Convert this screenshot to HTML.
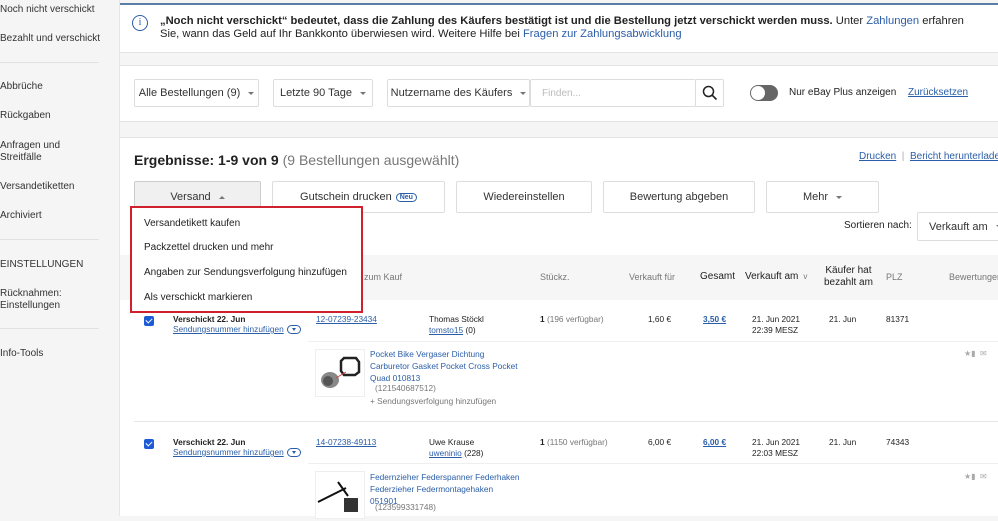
<!DOCTYPE html>
<html><head><meta charset="utf-8"><style>
*{margin:0;padding:0;box-sizing:border-box}
body{width:998px;height:516px;overflow:hidden;background:#f5f5f5;font-family:"Liberation Sans",Arial,sans-serif;color:#333;position:relative;font-size:11px}
.a{position:absolute;white-space:nowrap}
.side{font-size:10px;color:#333}
.hr{position:absolute;height:1px;background:#e2e2e2}
.panel{position:absolute;background:#fff}
.btn{position:absolute;border:1px solid #ddd;background:#fff;border-radius:2px;font-size:11px;color:#333;display:flex;align-items:center;justify-content:center;white-space:nowrap}
.caret{display:inline-block;width:0;height:0;border-left:3px solid transparent;border-right:3px solid transparent;border-top:3px solid #777;margin-left:8px;vertical-align:middle}
.lnk{color:#2a5ea8}
.u{text-decoration:underline}
.g{color:#777}
.cb{position:absolute;width:10px;height:10px;background:#1d5bd6;border-radius:2px}
.cb:after{content:"";position:absolute;left:3px;top:1px;width:3px;height:5px;border:solid #fff;border-width:0 1.5px 1.5px 0;transform:rotate(45deg)}
.pill{display:inline-block;border:1px solid #2a5ea8;border-radius:6px;width:14px;height:9px;vertical-align:middle;position:relative}
.pill:after{content:"";position:absolute;left:4px;top:2px;border-left:2.5px solid transparent;border-right:2.5px solid transparent;border-top:3px solid #2a5ea8}
.t{font-size:8.3px}
</style></head><body>
<!-- sidebar -->
<div class="a side" style="left:0;top:4px">Noch nicht verschickt</div>
<div class="a side" style="left:0;top:33px">Bezahlt und verschickt</div>
<div class="hr" style="left:0;top:62px;width:99px"></div>
<div class="a side" style="left:0;top:81px">Abbrüche</div>
<div class="a side" style="left:0;top:110px">Rückgaben</div>
<div class="a side" style="left:0;top:140px;line-height:12px">Anfragen und<br>Streitfälle</div>
<div class="a side" style="left:0;top:181px">Versandetiketten</div>
<div class="a side" style="left:0;top:210px">Archiviert</div>
<div class="hr" style="left:0;top:239px;width:99px"></div>
<div class="a side" style="left:0;top:259px">EINSTELLUNGEN</div>
<div class="a side" style="left:0;top:288px;line-height:12px">Rücknahmen:<br>Einstellungen</div>
<div class="hr" style="left:0;top:328px;width:99px"></div>
<div class="a side" style="left:0;top:348px">Info-Tools</div>
<div style="position:absolute;left:119px;top:0;width:1px;height:516px;background:#e6e6e6"></div>

<!-- info panel -->
<div class="panel" style="left:120px;top:3px;width:878px;height:50px;border-top:2px solid #5a7fa6;border-bottom:1px solid #e4e4e4"></div>
<div class="a" style="left:132px;top:15px;width:16px;height:16px;border:1.5px solid #2a5ea8;border-radius:50%;color:#2a5ea8;font-size:10px;text-align:center;line-height:13px;font-family:'Liberation Serif',serif">i</div>
<div class="a" style="left:160px;top:15px;font-size:11.2px;line-height:13px;color:#222"><b>„Noch nicht verschickt“ bedeutet, dass die Zahlung des Käufers bestätigt ist und die Bestellung jetzt verschickt werden muss.</b> Unter <span class="lnk">Zahlungen</span> erfahren<br>Sie, wann das Geld auf Ihr Bankkonto überwiesen wird. Weitere Hilfe bei <span class="lnk">Fragen zur Zahlungsabwicklung</span></div>

<!-- filter panel -->
<div class="panel" style="left:120px;top:65px;width:878px;height:57px;border-top:1px solid #e4e4e4;border-bottom:1px solid #e4e4e4"></div>
<div class="btn" style="left:134px;top:79px;width:125px;height:28px">Alle Bestellungen (9)<span class="caret"></span></div>
<div class="btn" style="left:273px;top:79px;width:100px;height:28px">Letzte 90 Tage<span class="caret"></span></div>
<div class="btn" style="left:387px;top:79px;width:143px;height:28px">Nutzername des Käufers<span class="caret"></span></div>
<div class="btn" style="left:530px;top:79px;width:166px;height:28px;justify-content:flex-start;padding-left:11px;color:#bbb;font-size:10px">Finden...</div>
<div class="btn" style="left:695px;top:79px;width:29px;height:28px">
<svg width="16" height="16" viewBox="0 0 16 16"><circle cx="6.5" cy="6.5" r="5" fill="none" stroke="#222" stroke-width="1.5"/><path d="M10 10l4.5 4.5" stroke="#222" stroke-width="1.6"/></svg></div>
<div class="a" style="left:750px;top:85px;width:28px;height:16px;border-radius:8px;background:#666"><div style="position:absolute;left:1px;top:1px;width:14px;height:14px;border-radius:50%;background:#fff"></div></div>
<div class="a" style="left:789px;top:87px;font-size:10px;color:#222">Nur eBay Plus anzeigen</div>
<div class="a lnk u" style="left:908px;top:87px;font-size:10px">Zurücksetzen</div>

<!-- results panel -->
<div class="panel" style="left:120px;top:137px;width:878px;height:379px;border-top:1px solid #e4e4e4"></div>
<div class="a" style="left:134px;top:152px;font-size:14px;color:#222"><b>Ergebnisse: 1-9 von 9</b> <span style="color:#777">(9 Bestellungen ausgewählt)</span></div>
<div class="a" style="left:859px;top:151px;font-size:10px"><span class="lnk u">Drucken</span> <span style="color:#aaa">&nbsp;|&nbsp;</span> <span class="lnk u">Bericht herunterladen</span></div>
<div class="btn" style="left:134px;top:181px;width:127px;height:32px;background:#f0f0f0;border-color:#ccc">Versand<span class="caret" style="border-top:none;border-bottom:3px solid #777"></span></div>
<div class="btn" style="left:272px;top:181px;width:173px;height:32px">Gutschein drucken <span style="margin-left:4px;border:1px solid #2a5ea8;border-radius:7px;font-size:7px;padding:0 3px;color:#2a5ea8;font-weight:bold">Neu</span></div>
<div class="btn" style="left:456px;top:181px;width:136px;height:32px">Wiedereinstellen</div>
<div class="btn" style="left:603px;top:181px;width:152px;height:32px">Bewertung abgeben</div>
<div class="btn" style="left:766px;top:181px;width:113px;height:32px">Mehr<span class="caret"></span></div>
<div class="a" style="left:844px;top:220px;font-size:10px;color:#222">Sortieren nach:</div>
<div class="btn" style="left:917px;top:212px;width:90px;height:29px;justify-content:flex-start;padding-left:11px">Verkauft am<span class="caret"></span></div>

<!-- table header -->
<div class="a" style="left:120px;top:255px;width:878px;height:45px;background:#f6f6f6"></div>
<div class="a g" style="left:364px;top:272px;font-size:9px">zum Kauf</div>
<div class="a g" style="left:540px;top:272px;font-size:9px">Stückz.</div>
<div class="a g" style="left:629px;top:272px;font-size:9px">Verkauft für</div>
<div class="a" style="left:700px;top:271px;font-size:10px;color:#222">Gesamt</div>
<div class="a" style="left:745px;top:271px;font-size:10px;color:#222">Verkauft am <span class="g" style="font-size:8px">&nbsp;v</span></div>
<div class="a" style="left:824px;top:265px;font-size:10px;color:#222;text-align:center;line-height:12px">Käufer hat<br>bezahlt am</div>
<div class="a g" style="left:886px;top:272px;font-size:9px">PLZ</div>
<div class="a g" style="left:949px;top:272px;font-size:9px">Bewertungen</div>

<!-- row 1 -->
<div class="cb" style="left:144px;top:316px"></div>
<div class="a t" style="left:173px;top:314px;line-height:10px;color:#222"><b>Verschickt 22. Jun</b></div>
<div class="a lnk u t" style="left:173px;top:324px">Sendungsnummer hinzufügen</div><span class="pill" style="position:absolute;left:287px;top:325px"></span>
<div class="a lnk u t" style="left:316px;top:314px">12-07239-23434</div>
<div class="a t" style="left:429px;top:314px;line-height:11px;color:#222">Thomas Stöckl<br><span class="lnk u">tomsto15</span> (0)</div>
<div class="a t" style="left:540px;top:314px;color:#222"><b>1</b> <span class="g">(196 verfügbar)</span></div>
<div class="a t" style="left:648px;top:314px;color:#222">1,60 €</div>
<div class="a lnk u t" style="left:703px;top:314px"><b>3,50 €</b></div>
<div class="a t" style="left:752px;top:314px;line-height:11px;color:#222">21. Jun 2021<br>22:39 MESZ</div>
<div class="a t" style="left:829px;top:314px;color:#222">21. Jun</div>
<div class="a t" style="left:886px;top:314px;color:#222">81371</div>
<div class="hr" style="left:308px;top:341px;width:690px;background:#efefef"></div>
<div class="a" style="left:315px;top:349px;width:50px;height:48px;border:1px solid #eee;background:#fff">
<svg width="48" height="46" viewBox="0 0 48 46"><ellipse cx="14" cy="30" rx="9" ry="8" fill="#888"/><ellipse cx="12" cy="31" rx="5" ry="5" fill="#555"/><path d="M28 8h12l3 4v10l-4 3h-11l-3-4V11z" fill="none" stroke="#222" stroke-width="2.5"/><path d="M20 28l10-6" stroke="#c44" stroke-width="1"/></svg></div>
<div class="a lnk t" style="left:370px;top:348px;line-height:12px">Pocket Bike Vergaser Dichtung<br>Carburetor Gasket Pocket Cross Pocket<br>Quad 010813</div>
<div class="a g t" style="left:375px;top:383px">(121540687512)</div>
<div class="a g t" style="left:370px;top:396px">+ Sendungsverfolgung hinzufügen</div>
<div class="a" style="left:964px;top:349px;font-size:8px;color:#aaa">★▮ &nbsp;✉</div>
<div class="hr" style="left:134px;top:421px;width:864px;background:#e6e6e6"></div>

<!-- row 2 -->
<div class="cb" style="left:144px;top:439px"></div>
<div class="a t" style="left:173px;top:437px;line-height:10px;color:#222"><b>Verschickt 22. Jun</b></div>
<div class="a lnk u t" style="left:173px;top:447px">Sendungsnummer hinzufügen</div><span class="pill" style="position:absolute;left:287px;top:448px"></span>
<div class="a lnk u t" style="left:316px;top:437px">14-07238-49113</div>
<div class="a t" style="left:429px;top:437px;line-height:11px;color:#222">Uwe Krause<br><span class="lnk u">uweninio</span> (228)</div>
<div class="a t" style="left:540px;top:437px;color:#222"><b>1</b> <span class="g">(1150 verfügbar)</span></div>
<div class="a t" style="left:648px;top:437px;color:#222">6,00 €</div>
<div class="a lnk u t" style="left:703px;top:437px"><b>6,00 €</b></div>
<div class="a t" style="left:752px;top:437px;line-height:11px;color:#222">21. Jun 2021<br>22:03 MESZ</div>
<div class="a t" style="left:829px;top:437px;color:#222">21. Jun</div>
<div class="a t" style="left:886px;top:437px;color:#222">74343</div>
<div class="hr" style="left:308px;top:463px;width:690px;background:#efefef"></div>
<div class="a" style="left:315px;top:471px;width:50px;height:48px;border:1px solid #eee;background:#fff">
<svg width="48" height="46" viewBox="0 0 48 46"><path d="M2 30l28-14M22 10l10 14" stroke="#111" stroke-width="2" fill="none"/><rect x="28" y="26" width="14" height="14" fill="#333"/></svg></div>
<div class="a lnk t" style="left:370px;top:471px;line-height:12px">Federnzieher Federspanner Federhaken<br>Federzieher Federmontagehaken<br>051901</div>
<div class="a g t" style="left:375px;top:502px">(123599331748)</div>
<div class="a" style="left:964px;top:472px;font-size:8px;color:#aaa">★▮ &nbsp;✉</div>

<!-- dropdown -->
<div class="a" style="left:130px;top:206px;width:233px;height:107px;background:#fff;border:2px solid #d0202e"></div>
<div class="a" style="left:144px;top:218px;font-size:10px;color:#222">Versandetikett kaufen</div>
<div class="a" style="left:144px;top:242px;font-size:10px;color:#222">Packzettel drucken und mehr</div>
<div class="a" style="left:144px;top:267px;font-size:10px;color:#222">Angaben zur Sendungsverfolgung hinzufügen</div>
<div class="a" style="left:144px;top:292px;font-size:10px;color:#222">Als verschickt markieren</div>
</body></html>
